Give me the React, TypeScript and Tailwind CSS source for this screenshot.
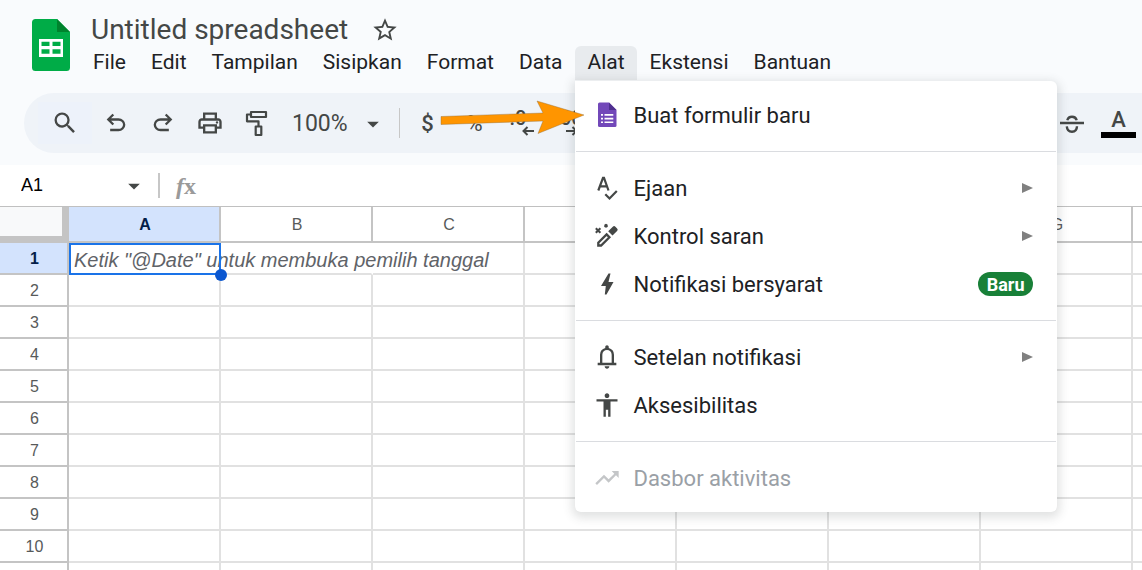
import type { ReactNode } from "react";
import {
  MdAccessibility,
  MdArrowDropDown,
  MdOutlinePrint,
  MdSearch,
  MdStarBorder,
  MdTrendingUp,
} from "react-icons/md";

const COLUMNS = ["A", "B", "C", "D", "E", "F", "G", "H"];
const ROWS = [1, 2, 3, 4, 5, 6, 7, 8, 9, 10, 11];

function SheetsLogo() {
  return (
    <svg width="38" height="52" viewBox="0 0 38 52" aria-hidden="true">
      <path d="M3.500 0H25l13 13v35.500a3.500 3.500 0 0 1-3.500 3.500h-31A3.500 3.500 0 0 1 0 48.500v-45A3.500 3.500 0 0 1 3.500 0z" fill="#00ac47" />
      <path d="M25 0l13 13H25z" fill="#00832d" />
      <path d="M7 20h24v18H7zM9.500 22.700v4.400h8v-4.400zm11 0v4.400h8v-4.400zm-11 7.600v4.400h8v-4.400zm11 0v4.400h8v-4.400z" fill="#fff" fillRule="evenodd" />
    </svg>
  );
}

function FormsIcon() {
  return (
    <svg width="28" height="28" viewBox="0 0 28 28" aria-hidden="true">
      <path d="M6.500 1.500H16l7.500 7.500v15.500a1.500 1.500 0 0 1-1.500 1.500H6.500A1.500 1.500 0 0 1 5 24.500V3a1.500 1.500 0 0 1 1.500-1.500z" fill="#7248b9" />
      <path d="M16 1.500L23.500 9H16z" fill="#4f2f8f" />
      <path d="M8 13h2v1.700H8zm3.500 0h8.800v1.700h-8.800zM8 16.700h2v1.700H8zm3.500 0h8.800v1.700h-8.800zM8 20.400h2v1.700H8zm3.500 0h8.800v1.700h-8.800z" fill="#fff" />
    </svg>
  );
}

function UndoIcon({ flip = false }: { flip?: boolean }) {
  return (
    <svg width="28" height="28" viewBox="0 0 24 24" fill="currentColor" className={flip ? "-scale-x-100" : ""} aria-hidden="true">
      <path d="M7 19v-2h7.100q1.575 0 2.738-1T18 13.500T16.838 11T14.100 10H7.800l2.600 2.600L9 14L4 9l5-5l1.400 1.400L7.800 8h6.300q2.425 0 4.163 1.575T20 13.500t-1.737 3.925T14.100 19z" />
    </svg>
  );
}

function PaintIcon() {
  return (
    <svg width="28" height="28" viewBox="0 0 28 28" fill="none" stroke="currentColor" strokeWidth="2.200" strokeLinejoin="round" aria-hidden="true">
      <path d="M8 3h15v5H8zM8 5.500H4v6.800h11.500v5M12.700 17.500h5.600v8.500h-5.600z" />
    </svg>
  );
}

function SpellIcon() {
  return (
    <svg width="28" height="28" viewBox="0 0 28 28" fill="none" stroke="currentColor" strokeWidth="2.200" aria-hidden="true">
      <path d="M5.300 16.500L10 3.800h1L15.500 16.500M7.200 12.300h6.800M12.300 20.300l4.200 4.200 7.300-7.500" />
    </svg>
  );
}

function WandIcon() {
  return (
    <svg width="28" height="28" viewBox="0 0 28 28" aria-hidden="true">
      <path d="M15.200 9.300l4.600-4.600q1.300-1.300 2.600 0l1.700 1.700q1.300 1.300 0 2.600l-4.600 4.600z" fill="currentColor" />
      <path d="M13.600 12.400l2.800 2.800-8.300 8.300H5.300v-2.800z" fill="none" stroke="currentColor" strokeWidth="2.300" />
      <path d="M2.800 6.200L7.400 10.800M7.400 6.200L2.800 10.800M11.700 2.500l2.600 2.600M14.300 2.500l-2.600 2.600" fill="none" stroke="currentColor" strokeWidth="2" />
    </svg>
  );
}

function BoltIcon() {
  return (
    <svg width="28" height="28" viewBox="0 0 28 28" fill="currentColor" aria-hidden="true">
      <path d="M15.500 3.500L8 16h4.800l-1 8.500h1.700L20.500 12h-5l2-8.500z" />
    </svg>
  );
}

function BellIcon() {
  return (
    <svg width="28" height="28" viewBox="0 0 24 24" fill="currentColor" aria-hidden="true">
      <path d="M4 19v-2h2v-7q0-2.075 1.250-3.687T10.500 4.200v-.7q0-.625.438-1.062T12 2t1.063.438T13.500 3.500v.7q2 .5 3.250 2.113T18 10v7h2v2zm8 3q-.825 0-1.412-.587T10 20h4q0 .825-.587 1.413T12 22m-4-5h8v-7q0-1.650-1.175-2.825T12 6T9.175 7.175T8 10z" />
    </svg>
  );
}

function StrikeIcon() {
  return (
    <svg width="28" height="28" viewBox="0 0 28 28" fill="none" stroke="currentColor" strokeWidth="2.400" aria-hidden="true">
      <path d="M2 14h24M9.300 11.300q1-3.600 4.700-3.600t4.700 3.600M8.800 17.300q.4 5.400 5.200 5.400t5-5.400" />
    </svg>
  );
}

// Number format with the small arrow underneath
function Decimals({ label, right = false }: { label: string; right?: boolean }) {
  return (
    <span className="flex flex-col items-start">
      <span className="text-[20px] leading-4 font-medium">{label}</span>
      <svg width="12" height="10" viewBox="0 0 12 10" fill="none" stroke="currentColor" strokeWidth="2" className={right ? "ml-3 -scale-x-100" : "ml-3"} aria-hidden="true">
        <path d="M12 5H2M5.500 1L1.500 5l4 4" />
      </svg>
    </span>
  );
}

function ToolButton({ label, children }: { label: string; children: ReactNode }) {
  return (
    <button type="button" aria-label={label} className="flex h-[42px] w-[47px] shrink-0 items-center justify-center">
      {children}
    </button>
  );
}

function MenuItem({
  icon,
  label,
  submenu = false,
  badge,
  disabled = false,
}: {
  icon: ReactNode;
  label: string;
  submenu?: boolean;
  badge?: string;
  disabled?: boolean;
}) {
  return (
    <button
      type="button"
      role="menuitem"
      disabled={disabled}
      className={
        disabled
          ? "flex h-12 w-full items-center pr-6 pl-[18px] text-[#c4c6c8]"
          : "flex h-12 w-full items-center pr-6 pl-[18px] text-[#444746]"
      }
    >
      {icon}
      <span className={disabled ? "ml-3 text-[22px] text-[#9aa0a6]" : "ml-3 text-[22px] text-[#202124]"}>{label}</span>
      {submenu && (
        <svg width="11" height="10" viewBox="0 0 11 10" className="ml-auto" fill="#808080" aria-hidden="true">
          <path d="M0 0l11 5-11 5z" />
        </svg>
      )}
      {badge && (
        <span className="ml-auto flex h-6 items-center rounded-full bg-[#188038] px-[9px] text-[18px] font-bold text-white">
          {badge}
        </span>
      )}
    </button>
  );
}

function Divider() {
  return <div role="separator" className="mx-px my-3 h-px bg-[#dadce0]" />;
}

function ToolsMenu() {
  return (
    <div
      role="menu"
      className="absolute top-[35px] left-0 z-20 w-[482px] rounded-b-md rounded-tr-md bg-white py-2.5 shadow-[0_3px_10px_3px_rgba(60,64,67,0.15)]"
    >
      <MenuItem icon={<FormsIcon />} label="Buat formulir baru" />
      <Divider />
      <MenuItem icon={<SpellIcon />} label="Ejaan" submenu />
      <MenuItem icon={<WandIcon />} label="Kontrol saran" submenu />
      <MenuItem icon={<BoltIcon />} label="Notifikasi bersyarat" badge="Baru" />
      <Divider />
      <MenuItem icon={<BellIcon />} label="Setelan notifikasi" submenu />
      <MenuItem icon={<MdAccessibility size={28} />} label="Aksesibilitas" />
      <Divider />
      <MenuItem icon={<MdTrendingUp size={28} />} label="Dasbor aktivitas" disabled />
    </div>
  );
}

function MenuButton({ children }: { children: ReactNode }) {
  return (
    <button type="button" className="h-[34px] px-3">
      {children}
    </button>
  );
}

function Grid() {
  return (
    <table className="w-[1285px] shrink-0 table-fixed border-separate border-spacing-0 font-['Liberation_Sans',Arial,sans-serif] text-base text-[#575a5a]">
      <thead>
        <tr className="h-9">
          <th className="w-[69px] border-r-[7px] border-b-[7px] border-[#c4c4c4] bg-[#f8f9fa] p-0" />
          {COLUMNS.map((col) => (
            <th
              key={col}
              scope="col"
              className={
                col === "A"
                  ? "w-[152px] border-r-2 border-b-2 border-[#c4c4c4] bg-[#d3e3fd] p-0 pt-0.5 pl-0.5 font-bold text-[#041e49]"
                  : "w-[152px] border-r-2 border-b-2 border-[#c4c4c4] p-0 pt-0.5 pl-0.5 font-normal"
              }
            >
              {col}
            </th>
          ))}
        </tr>
      </thead>
      <tbody>
        {ROWS.map((row) => (
          <tr key={row} className="h-8">
            <th
              scope="row"
              className={
                row === 1
                  ? "border-r-2 border-b-2 border-[#c4c4c4] bg-[#d3e3fd] p-0 pt-0.5 pl-0.5 font-bold text-[#041e49]"
                  : "border-r-2 border-b-2 border-[#c4c4c4] p-0 pt-0.5 pl-0.5 font-normal"
              }
            >
              {row}
            </th>
            {COLUMNS.map((col) => {
              if (row === 1 && col === "A") {
                return (
                  <td key={col} className="relative p-0">
                    <span className="absolute top-px left-[5px] z-[1] leading-8 text-xl whitespace-nowrap text-[#5f6368] italic">
                      Ketik "@Date" untuk membuka pemilih tanggal
                    </span>
                    <span className="absolute inset-0 z-[2] border-2 border-[#1a73e8]" />
                    <span className="absolute -right-1.5 -bottom-1.5 z-[2] size-3 rounded-full bg-[#0b57d0]" />
                  </td>
                );
              }
              // B1 has no right line, the hint in A1 runs over it
              return (
                <td
                  key={col}
                  className={
                    row === 1 && col === "B"
                      ? "border-r-2 border-b-2 border-r-white border-b-[#e1e1e1] p-0"
                      : "border-r-2 border-b-2 border-[#e1e1e1] p-0"
                  }
                />
              );
            })}
          </tr>
        ))}
      </tbody>
    </table>
  );
}

export default function App() {
  return (
    <div className="relative flex h-screen flex-col overflow-hidden bg-white font-[Roboto,sans-serif] text-[#444746]">
      <header className="shrink-0 bg-[#f9fbfd] pb-3">
        <div className="flex pt-3 pl-8">
          <div className="pt-[7px]">
            <SheetsLogo />
          </div>
          <div className="ml-[11px]">
            <div className="flex h-[34px] items-center pt-0.5 pl-2.5">
              <input
                aria-label="Nama spreadsheet"
                defaultValue="Untitled spreadsheet"
                className="w-[280px] bg-transparent text-[28px] outline-none"
              />
              <button type="button" aria-label="Bintangi">
                <MdStarBorder size={28} />
              </button>
            </div>
            {/* Menu bar */}
            <nav className="flex gap-px text-[21px] text-[#202124]">
              <MenuButton>File</MenuButton>
              <MenuButton>Edit</MenuButton>
              <MenuButton>Tampilan</MenuButton>
              <MenuButton>Sisipkan</MenuButton>
              <MenuButton>Format</MenuButton>
              <MenuButton>Data</MenuButton>
              <div className="relative">
                <button type="button" aria-expanded="true" className="h-[34px] rounded-t-md bg-[#e8ebee] px-3">
                  Alat
                </button>
                <ToolsMenu />
              </div>
              <MenuButton>Ekstensi</MenuButton>
              <MenuButton>Bantuan</MenuButton>
            </nav>
          </div>
        </div>

        {/* Toolbar */}
        <div className="mt-[13px] ml-6 flex h-[60px] items-center rounded-l-full bg-[#eff3f8] pl-3.5">
          <button type="button" aria-label="Cari menu" className="flex h-[42px] w-[54px] items-center justify-center bg-[#edf2fa]">
            <MdSearch size={28} />
          </button>
          <ToolButton label="Urungkan"><UndoIcon /></ToolButton>
          <ToolButton label="Ulangi"><UndoIcon flip /></ToolButton>
          <ToolButton label="Cetak"><MdOutlinePrint size={28} /></ToolButton>
          <ToolButton label="Salin format"><PaintIcon /></ToolButton>
          <button type="button" className="flex w-[119px] items-center justify-between pr-3 pl-3 pt-0.5 text-[23px]">
            100%
            <MdArrowDropDown size={28} />
          </button>
          <div className="mr-1 h-[30px] w-px bg-[#c7c7c7]" />
          <ToolButton label="Mata uang"><span className="text-[22px] font-medium">$</span></ToolButton>
          <ToolButton label="Persen"><span className="text-[22px]">%</span></ToolButton>
          <ToolButton label="Kurangi desimal"><Decimals label=".0" /></ToolButton>
          <ToolButton label="Tambah desimal"><Decimals label=".00" right /></ToolButton>
          <div className="ml-auto flex">
            <ToolButton label="Coret"><StrikeIcon /></ToolButton>
            <ToolButton label="Warna teks">
              <span className="flex flex-col items-center">
                <span className="text-[22px] leading-6 font-medium">A</span>
                <span className="h-1.5 w-[35px] bg-black" />
              </span>
            </ToolButton>
          </div>
        </div>
      </header>

      {/* Name box and formula bar */}
      <div className="flex h-[42px] shrink-0 items-center border-b border-[#c0c0c0] font-['Liberation_Sans',Arial,sans-serif]">
        <input
          aria-label="Kotak nama"
          defaultValue="A1"
          className="ml-5 w-[100px] bg-transparent pb-0.5 pl-px text-lg text-black outline-none"
        />
        <MdArrowDropDown size={28} />
        <div className="ml-2.5 h-[25px] w-0.5 bg-[#c7c7c7]" />
        <span className="ml-4 flex font-['Liberation_Serif',serif] text-2xl font-bold text-[#9a9a9a]">
          <span className="italic">f</span>
          <span>x</span>
        </span>
        <input aria-label="Rumus" className="ml-3 flex-1 bg-transparent outline-none" />
      </div>

      <Grid />

      {/* Arrow pointing at the first menu entry */}
      <svg width="146" height="36" viewBox="0 0 146 36" className="pointer-events-none absolute top-[99px] left-[440px] z-30" aria-hidden="true">
        <path d="M1 17.500L103 14 97 2l47 14-46 18.500 5-12.500L1 25.500z" fill="#ff9500" stroke="#8a6a3a" strokeWidth=".4" />
      </svg>
    </div>
  );
}
